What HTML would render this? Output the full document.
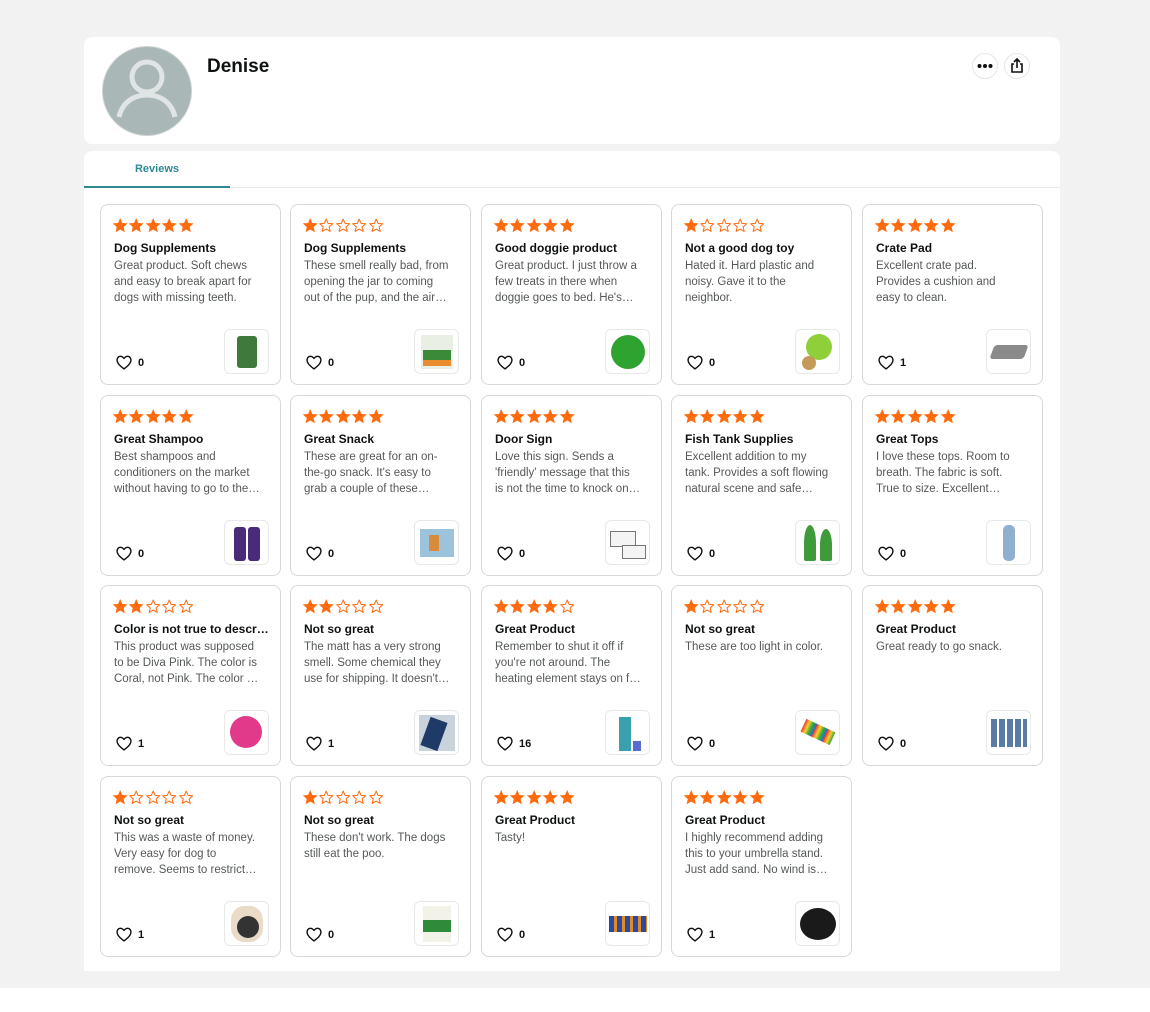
<!DOCTYPE html>
<html><head><meta charset="utf-8"><style>
*{box-sizing:border-box;margin:0;padding:0}
html,body{width:1150px;height:1012px;background:#fff;font-family:"Liberation Sans",Arial,sans-serif;overflow:hidden}
.bg{position:absolute;left:0;top:0;width:1150px;height:988px;background:#f2f2f2}
.hdr{position:absolute;left:84px;top:37px;width:976px;height:107px;background:#fff;border-radius:8px}
.av{position:absolute;left:18px;top:9px;width:90px;height:90px;border-radius:50%;background:#aab7b7;border:1px solid #ccd3d3}
.name{position:absolute;left:123px;top:19px;font-size:19px;font-weight:bold;color:#0f1111}
.cb{position:absolute;top:16px;width:26px;height:26px;border-radius:50%;border:1px solid #e3e6e6;background:#fff}
.main{position:absolute;left:84px;top:151px;width:976px;height:820px;background:#fff;border-radius:8px 8px 0 0}
.tabline{position:absolute;left:0;top:36px;width:976px;height:1px;background:#e7e9e9}
.tab{position:absolute;left:0;top:0;width:146px;height:37px;border-bottom:2px solid #2d8a95;text-align:center;line-height:37px;font-size:11px;font-weight:bold;color:#2d8a95}
.c{position:absolute;width:181px;height:181px;border:1px solid #d5d9d9;border-radius:8px;background:#fff}
.st{position:absolute;left:11px;top:12px;height:16px;display:flex}
.st svg{width:16.4px;height:16.4px}
.t{position:absolute;left:13px;top:35px;width:156px;font-size:12px;font-weight:bold;color:#0f1111;white-space:nowrap;overflow:hidden;text-overflow:ellipsis;line-height:16px}
.d{position:absolute;left:13px;top:53px;width:146px;font-size:11.5px;color:#565959;line-height:16px;max-height:48px;overflow:hidden;display:-webkit-box;-webkit-line-clamp:3;-webkit-box-orient:vertical}
.h{position:absolute;left:14px;top:149px;width:18px;height:17px}
.n{position:absolute;left:37px;top:152px;font-size:11px;color:#0f1111;font-weight:bold}
.im{position:absolute;left:123px;top:124px;width:45px;height:45px;border:1px solid #e7e9e9;border-radius:6px;background:#fff;overflow:hidden}
.im i{position:absolute;display:block}
</style></head><body>
<svg width="0" height="0" style="position:absolute"><defs>
<symbol id="f" viewBox="0 0 24 24"><path d="M12 1.5l3.1 7.2 7.8.7-5.9 5.2 1.8 7.7L12 18.3l-6.8 4 1.8-7.7L1.1 9.4l7.8-.7z" fill="#ff6a0d"/></symbol>
<symbol id="e" viewBox="0 0 24 24"><path d="M12 3l2.7 6.3 6.8.6-5.2 4.5 1.6 6.7L12 17.6l-5.9 3.5 1.6-6.7-5.2-4.5 6.8-.6z" fill="none" stroke="#ff6a0d" stroke-width="1.5" stroke-linejoin="round"/></symbol>
<symbol id="hh" viewBox="0 0 24 24"><path d="M12 21s-8.5-5.6-9.6-11C1.6 6 4 3.3 7 3.3c2.1 0 3.6 1.2 5 3 1.4-1.8 2.9-3 5-3 3 0 5.4 2.7 4.6 6.7C20.5 15.4 12 21 12 21z" fill="none" stroke="#0f1111" stroke-width="2" stroke-linejoin="round"/></symbol>
</defs></svg>
<div class="bg"></div>
<div class="hdr">
 <div class="av"><svg width="90" height="90" viewBox="0 0 90 90" style="position:absolute;left:-1px;top:-1px"><circle cx="45" cy="31" r="15" fill="none" stroke="#dfe5e5" stroke-width="5"/><path d="M17 71c3-14 14-22 28-22s25 8 28 22" fill="none" stroke="#dfe5e5" stroke-width="5"/></svg></div>
 <div class="name">Denise</div>
 <div class="cb" style="left:888px"><svg width="26" height="26" viewBox="0 0 26 26" style="position:absolute;left:-1px;top:-1px"><circle cx="7.5" cy="13" r="2" fill="#0f1111"/><circle cx="13" cy="13" r="2" fill="#0f1111"/><circle cx="18.5" cy="13" r="2" fill="#0f1111"/></svg></div>
 <div class="cb" style="left:920px"><svg width="26" height="26" viewBox="0 0 26 26" style="position:absolute;left:-1px;top:-1px"><path d="M10 11H8v8h10v-8h-2M13 15V6M10 9l3-3 3 3" fill="none" stroke="#0f1111" stroke-width="1.6"/></svg></div>
</div>
<div class="main">
 <div class="tabline"></div>
 <div class="tab">Reviews</div>
</div>

<div class="c" style="left:100px;top:204px"><div class="st"><svg><use href="#f"/></svg><svg><use href="#f"/></svg><svg><use href="#f"/></svg><svg><use href="#f"/></svg><svg><use href="#f"/></svg></div><div class="t">Dog Supplements</div><div class="d">Great product. Soft chews and easy to break apart for dogs with missing teeth.</div><svg class="h"><use href="#hh"/></svg><div class="n">0</div><div class="im"><i style="left:12px;top:6px;width:20px;height:32px;background:#3f7a3a;border-radius:3px"></i></div></div>
<div class="c" style="left:290px;top:204px"><div class="st"><svg><use href="#f"/></svg><svg><use href="#e"/></svg><svg><use href="#e"/></svg><svg><use href="#e"/></svg><svg><use href="#e"/></svg></div><div class="t">Dog Supplements</div><div class="d">These smell really bad, from opening the jar to coming out of the pup, and the air around the dog.</div><svg class="h"><use href="#hh"/></svg><div class="n">0</div><div class="im"><i style="left:6px;top:5px;width:32px;height:34px;background:#e9efe5"></i><i style="left:8px;top:20px;width:28px;height:10px;background:#3a8a3a"></i><i style="left:8px;top:30px;width:28px;height:6px;background:#e98b2f"></i></div></div>
<div class="c" style="left:481px;top:204px"><div class="st"><svg><use href="#f"/></svg><svg><use href="#f"/></svg><svg><use href="#f"/></svg><svg><use href="#f"/></svg><svg><use href="#f"/></svg></div><div class="t">Good doggie product</div><div class="d">Great product. I just throw a few treats in there when doggie goes to bed. He's busy for a while.</div><svg class="h"><use href="#hh"/></svg><div class="n">0</div><div class="im"><i style="left:5px;top:5px;width:34px;height:34px;background:#2fa32f;border-radius:50%"></i></div></div>
<div class="c" style="left:671px;top:204px"><div class="st"><svg><use href="#f"/></svg><svg><use href="#e"/></svg><svg><use href="#e"/></svg><svg><use href="#e"/></svg><svg><use href="#e"/></svg></div><div class="t">Not a good dog toy</div><div class="d">Hated it. Hard plastic and noisy. Gave it to the neighbor.</div><svg class="h"><use href="#hh"/></svg><div class="n">0</div><div class="im"><i style="left:10px;top:4px;width:26px;height:26px;background:#8fcf3a;border-radius:50%"></i><i style="left:6px;top:26px;width:14px;height:14px;background:#c49a5a;border-radius:50%"></i></div></div>
<div class="c" style="left:862px;top:204px"><div class="st"><svg><use href="#f"/></svg><svg><use href="#f"/></svg><svg><use href="#f"/></svg><svg><use href="#f"/></svg><svg><use href="#f"/></svg></div><div class="t">Crate Pad</div><div class="d">Excellent crate pad. Provides a cushion and easy to clean.</div><svg class="h"><use href="#hh"/></svg><div class="n">1</div><div class="im"><i style="left:5px;top:15px;width:34px;height:14px;background:#8a8a8a;border-radius:3px;transform:skewX(-20deg)"></i></div></div>

<div class="c" style="left:100px;top:395px"><div class="st"><svg><use href="#f"/></svg><svg><use href="#f"/></svg><svg><use href="#f"/></svg><svg><use href="#f"/></svg><svg><use href="#f"/></svg></div><div class="t">Great Shampoo</div><div class="d">Best shampoos and conditioners on the market without having to go to the groomer.</div><svg class="h"><use href="#hh"/></svg><div class="n">0</div><div class="im"><i style="left:9px;top:6px;width:12px;height:34px;background:#4a2b7a;border-radius:3px"></i><i style="left:23px;top:6px;width:12px;height:34px;background:#4a2b7a;border-radius:3px"></i></div></div>
<div class="c" style="left:290px;top:395px"><div class="st"><svg><use href="#f"/></svg><svg><use href="#f"/></svg><svg><use href="#f"/></svg><svg><use href="#f"/></svg><svg><use href="#f"/></svg></div><div class="t">Great Snack</div><div class="d">These are great for an on-the-go snack. It's easy to grab a couple of these before heading out.</div><svg class="h"><use href="#hh"/></svg><div class="n">0</div><div class="im"><i style="left:5px;top:8px;width:34px;height:28px;background:#9bc4dc"></i><i style="left:14px;top:14px;width:10px;height:16px;background:#d98a3a"></i></div></div>
<div class="c" style="left:481px;top:395px"><div class="st"><svg><use href="#f"/></svg><svg><use href="#f"/></svg><svg><use href="#f"/></svg><svg><use href="#f"/></svg><svg><use href="#f"/></svg></div><div class="t">Door Sign</div><div class="d">Love this sign. Sends a 'friendly' message that this is not the time to knock on the door.</div><svg class="h"><use href="#hh"/></svg><div class="n">0</div><div class="im"><i style="left:4px;top:10px;width:26px;height:16px;border:1px solid #777;background:#f4f4f4"></i><i style="left:16px;top:24px;width:24px;height:14px;border:1px solid #777;background:#f4f4f4"></i></div></div>
<div class="c" style="left:671px;top:395px"><div class="st"><svg><use href="#f"/></svg><svg><use href="#f"/></svg><svg><use href="#f"/></svg><svg><use href="#f"/></svg><svg><use href="#f"/></svg></div><div class="t">Fish Tank Supplies</div><div class="d">Excellent addition to my tank. Provides a soft flowing natural scene and safe place for fish.</div><svg class="h"><use href="#hh"/></svg><div class="n">0</div><div class="im"><i style="left:8px;top:4px;width:12px;height:36px;background:#3f9a3a;border-radius:50% 50% 2px 2px"></i><i style="left:24px;top:8px;width:12px;height:32px;background:#3f9a3a;border-radius:50% 50% 2px 2px"></i></div></div>
<div class="c" style="left:862px;top:395px"><div class="st"><svg><use href="#f"/></svg><svg><use href="#f"/></svg><svg><use href="#f"/></svg><svg><use href="#f"/></svg><svg><use href="#f"/></svg></div><div class="t">Great Tops</div><div class="d">I love these tops. Room to breath. The fabric is soft. True to size. Excellent purchase.</div><svg class="h"><use href="#hh"/></svg><div class="n">0</div><div class="im"><i style="left:16px;top:4px;width:12px;height:36px;background:#8fb0cf;border-radius:5px"></i></div></div>

<div class="c" style="left:100px;top:585px"><div class="st"><svg><use href="#f"/></svg><svg><use href="#f"/></svg><svg><use href="#e"/></svg><svg><use href="#e"/></svg><svg><use href="#e"/></svg></div><div class="t">Color is not true to description</div><div class="d">This product was supposed to be Diva Pink. The color is Coral, not Pink. The color is off.</div><svg class="h"><use href="#hh"/></svg><div class="n">1</div><div class="im"><i style="left:5px;top:5px;width:32px;height:32px;background:#e23a8a;border-radius:50%"></i></div></div>
<div class="c" style="left:290px;top:585px"><div class="st"><svg><use href="#f"/></svg><svg><use href="#f"/></svg><svg><use href="#e"/></svg><svg><use href="#e"/></svg><svg><use href="#e"/></svg></div><div class="t">Not so great</div><div class="d">The matt has a very strong smell. Some chemical they use for shipping. It doesn't go away.</div><svg class="h"><use href="#hh"/></svg><div class="n">1</div><div class="im"><i style="left:4px;top:4px;width:36px;height:36px;background:#c9d3dc"></i><i style="left:10px;top:8px;width:18px;height:30px;background:#1f3a66;transform:rotate(20deg)"></i></div></div>
<div class="c" style="left:481px;top:585px"><div class="st"><svg><use href="#f"/></svg><svg><use href="#f"/></svg><svg><use href="#f"/></svg><svg><use href="#f"/></svg><svg><use href="#e"/></svg></div><div class="t">Great Product</div><div class="d">Remember to shut it off if you're not around. The heating element stays on for hours.</div><svg class="h"><use href="#hh"/></svg><div class="n">16</div><div class="im"><i style="left:13px;top:6px;width:12px;height:34px;background:#3aa0b0"></i><i style="left:27px;top:30px;width:8px;height:10px;background:#5a6ad0"></i></div></div>
<div class="c" style="left:671px;top:585px"><div class="st"><svg><use href="#f"/></svg><svg><use href="#e"/></svg><svg><use href="#e"/></svg><svg><use href="#e"/></svg><svg><use href="#e"/></svg></div><div class="t">Not so great</div><div class="d">These are too light in color.</div><svg class="h"><use href="#hh"/></svg><div class="n">0</div><div class="im"><i style="left:6px;top:14px;width:32px;height:14px;background:repeating-linear-gradient(90deg,#e33,#fc3 4px,#3a3 8px,#36c 12px);transform:rotate(25deg)"></i></div></div>
<div class="c" style="left:862px;top:585px"><div class="st"><svg><use href="#f"/></svg><svg><use href="#f"/></svg><svg><use href="#f"/></svg><svg><use href="#f"/></svg><svg><use href="#f"/></svg></div><div class="t">Great Product</div><div class="d">Great ready to go snack.</div><svg class="h"><use href="#hh"/></svg><div class="n">0</div><div class="im"><i style="left:4px;top:8px;width:36px;height:28px;background:repeating-linear-gradient(90deg,#5a7aa8 0 6px,#fff 6px 8px)"></i></div></div>

<div class="c" style="left:100px;top:776px"><div class="st"><svg><use href="#f"/></svg><svg><use href="#e"/></svg><svg><use href="#e"/></svg><svg><use href="#e"/></svg><svg><use href="#e"/></svg></div><div class="t">Not so great</div><div class="d">This was a waste of money. Very easy for dog to remove. Seems to restrict breathing too.</div><svg class="h"><use href="#hh"/></svg><div class="n">1</div><div class="im"><i style="left:6px;top:4px;width:32px;height:36px;background:#eadbc8;border-radius:40%"></i><i style="left:12px;top:14px;width:22px;height:22px;background:#333;border-radius:50%"></i></div></div>
<div class="c" style="left:290px;top:776px"><div class="st"><svg><use href="#f"/></svg><svg><use href="#e"/></svg><svg><use href="#e"/></svg><svg><use href="#e"/></svg><svg><use href="#e"/></svg></div><div class="t">Not so great</div><div class="d">These don't work. The dogs still eat the poo.</div><svg class="h"><use href="#hh"/></svg><div class="n">0</div><div class="im"><i style="left:8px;top:4px;width:28px;height:36px;background:#f2f2e8"></i><i style="left:8px;top:18px;width:28px;height:12px;background:#2f8a3a"></i></div></div>
<div class="c" style="left:481px;top:776px"><div class="st"><svg><use href="#f"/></svg><svg><use href="#f"/></svg><svg><use href="#f"/></svg><svg><use href="#f"/></svg><svg><use href="#f"/></svg></div><div class="t">Great Product</div><div class="d">Tasty!</div><svg class="h"><use href="#hh"/></svg><div class="n">0</div><div class="im"><i style="left:3px;top:14px;width:38px;height:16px;background:repeating-linear-gradient(90deg,#2a4aa0 0 5px,#e08a2a 5px 8px)"></i></div></div>
<div class="c" style="left:671px;top:776px"><div class="st"><svg><use href="#f"/></svg><svg><use href="#f"/></svg><svg><use href="#f"/></svg><svg><use href="#f"/></svg><svg><use href="#f"/></svg></div><div class="t">Great Product</div><div class="d">I highly recommend adding this to your umbrella stand. Just add sand. No wind is moving it.</div><svg class="h"><use href="#hh"/></svg><div class="n">1</div><div class="im"><i style="left:4px;top:6px;width:36px;height:32px;background:#1a1a1a;border-radius:50%"></i></div></div>
</body></html>
